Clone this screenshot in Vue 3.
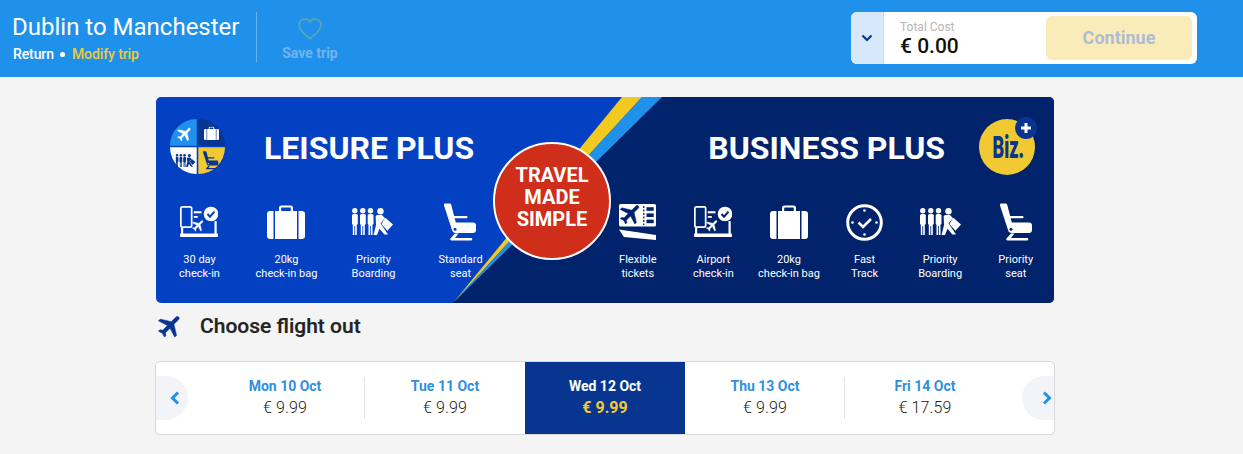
<script setup>
const leisure = [
  { icon: 'i-checkin', w: 38, h: 34, lines: ['30 day', 'check-in'] },
  { icon: 'i-bag', w: 38, h: 34, lines: ['20kg', 'check-in bag'] },
  { icon: 'i-people', w: 41, h: 28, lines: ['Priority', 'Boarding'] },
  { icon: 'i-seat', w: 32, h: 39, lines: ['Standard', 'seat'] }
]
const business = [
  { icon: 'i-ticket', w: 37, h: 36, lines: ['Flexible', 'tickets'] },
  { icon: 'i-checkin', w: 38, h: 34, lines: ['Airport', 'check-in'] },
  { icon: 'i-bag', w: 38, h: 34, lines: ['20kg', 'check-in bag'] },
  { icon: 'i-clock', w: 37, h: 37, lines: ['Fast', 'Track'] },
  { icon: 'i-people', w: 41, h: 28, lines: ['Priority', 'Boarding'] },
  { icon: 'i-seat', w: 32, h: 39, lines: ['Priority', 'seat'] }
]
const days = [
  { label: 'Mon 10 Oct', price: '€ 9.99' },
  { label: 'Tue 11 Oct', price: '€ 9.99' },
  { label: 'Wed 12 Oct', price: '€ 9.99', active: true },
  { label: 'Thu 13 Oct', price: '€ 9.99' },
  { label: 'Fri 14 Oct', price: '€ 17.59' }
]
</script>

<template>
  <div class="page">
    <svg class="defs" width="0" height="0" aria-hidden="true">
      <symbol id="i-plane" viewBox="0 0 24 24">
        <path fill="currentColor" stroke="currentColor" stroke-width=".5" d="M21 16v-2l-8-5V3.500c0-.83-.67-1.500-1.500-1.500S10 2.670 10 3.500V9l-8 5v2l8-2.500V19l-2 1.500V22l3.500-1 3.500 1v-1.500L13 19v-5.500l8 2.500z" transform="rotate(45 12 12)" />
      </symbol>
      <symbol id="i-bag" viewBox="0 0 38 34">
        <path fill="currentColor" d="M12 6V3a2.500 2.500 0 0 1 2.500-2.500h9A2.500 2.500 0 0 1 26 3v3h-2.200V3.200a.6.6 0 0 0-.6-.6h-8.400a.6.6 0 0 0-.6.6V6z" />
        <path fill="currentColor" d="M6.500 6v28H3a3 3 0 0 1-3-3V9a3 3 0 0 1 3-3zM8 6h22v28H8zM31.500 6H35a3 3 0 0 1 3 3v22a3 3 0 0 1-3 3h-3.500z" />
      </symbol>
      <symbol id="i-people" viewBox="0 0 41 28">
        <g fill="currentColor">
          <circle cx="2.800" cy="2.800" r="2.700" />
          <circle cx="10.800" cy="2.800" r="2.700" />
          <circle cx="18.500" cy="2.800" r="2.700" />
          <path d="M1.500 6h2.800A1.500 1.500 0 0 1 5.800 7.500v8.500l-1 .8V27H3.200v-9h-.8v9H.8V16.800L0 16V7.500A1.500 1.500 0 0 1 1.500 6z" />
          <path d="M9.500 6h2.800a1.500 1.500 0 0 1 1.500 1.500v8.500l-1 .8V27h-1.600v-9h-.8v9H8.800V16.800l-.8-.8V7.500A1.500 1.500 0 0 1 9.500 6z" />
          <path d="M17.200 6H20a1.500 1.500 0 0 1 1.500 1.500v8.500l-1 .8V27h-1.600v-9h-.8v9h-1.600V16.800l-.8-.8V7.500A1.500 1.500 0 0 1 17.200 6z" />
          <circle cx="28.500" cy="3.200" r="3.200" />
          <path d="M25 7h5l3 3.300-4.500 5.200 2.500 3.500 5 7.500h-3.600l-4.900-5.800-2.500 6.300H21.500l2.500-10-.3-7.500A2 2 0 0 1 25 7z" />
          <path d="M33.300 9.800L41 16.500l-5.600 6.300-6-6.700z" />
        </g>
      </symbol>
      <symbol id="i-seat" viewBox="0 0 32 39">
        <path fill="currentColor" d="M1 .5h5q1 0 1.300 1.500l4.500 17.500H29a3 3 0 0 1 3 3V27a3 3 0 0 1-3 3H12a4 4 0 0 1-4-3L0 2.500Q-.2.500 1 .5z" />
        <rect x="9" y="13" width="14.500" height="2.300" rx="1.100" fill="currentColor" />
        <circle cx="11" cy="26.300" r="1.500" fill="var(--cut)" />
        <path fill="currentColor" d="M11 30.500h3.500L11 35h16a1.300 1.300 0 0 1 0 2.600H7.500a1.300 1.300 0 0 1-1-2.100z" />
      </symbol>
      <symbol id="i-checkin" viewBox="0 0 38 34">
        <g fill="currentColor">
          <path fill-rule="evenodd" d="M2.500 1h7.500A2.500 2.500 0 0 1 12.500 3.500v17a2.500 2.500 0 0 1-2.500 2.500H2.500A2.500 2.500 0 0 1 0 20.500v-17A2.500 2.500 0 0 1 2.500 1zM2.300 2.800a.6.6 0 0 0-.6.6V20.600a.6.6 0 0 0 .6.6h7.900a.6.6 0 0 0 .6-.6V3.400a.6.6 0 0 0-.6-.6z" />
          <rect x="13.800" y="6.200" width="7.700" height="2.100" />
          <rect x="13.800" y="11" width="4" height="1.800" />
          <rect x="1" y="23" width="2.200" height="6" />
          <rect x="34.500" y="16" width="2.200" height="13" />
          <rect x="0" y="28.500" width="38" height="3.500" rx=".8" />
          <circle cx="31" cy="9" r="7.300" />
        </g>
        <path d="M27.500 9l2.500 2.700 4.500-5" fill="none" stroke="var(--cut)" stroke-width="2" />
        <use href="#i-plane" x="11" y="13" width="15" height="15" />
      </symbol>
      <symbol id="i-ticket" viewBox="0 0 37 36">
        <path fill="currentColor" d="M1.500 0h34A1.500 1.500 0 0 1 37 1.500V21a1.500 1.500 0 0 1-1.500 1.500h-34A1.500 1.500 0 0 1 0 21V1.500A1.500 1.500 0 0 1 1.500 0z" />
        <path fill="currentColor" d="M0 25.500L37 31v5L5 33z" />
        <path d="M24.800 2v19" stroke="var(--cut)" stroke-width="1.300" stroke-dasharray="2 1.500" />
        <rect x="27.500" y="3.200" width="7.200" height="3.600" fill="var(--cut)" />
        <rect x="27.500" y="9.400" width="7.200" height="3.600" fill="var(--cut)" />
        <rect x="27.500" y="15.600" width="7.200" height="3.600" fill="var(--cut)" />
        <use href="#i-plane" x="-1" y="-3" width="26" height="26" style="color: var(--cut)" />
      </symbol>
      <symbol id="i-clock" viewBox="0 0 37 37">
        <circle cx="18.500" cy="18.500" r="16.800" fill="none" stroke="currentColor" stroke-width="3" />
        <path d="M12.500 18.500l4.500 4.500 8-8" fill="none" stroke="currentColor" stroke-width="2.600" />
        <circle cx="18.500" cy="6.500" r="1.300" fill="currentColor" />
        <circle cx="18.500" cy="30.500" r="1.300" fill="currentColor" />
        <circle cx="6.500" cy="18.500" r="1.300" fill="currentColor" />
        <circle cx="30.500" cy="18.500" r="1.300" fill="currentColor" />
      </symbol>
    </svg>

    <header class="top">
      <div class="trip">
        <h1 class="route">Dublin to Manchester</h1>
        <p class="meta"><span>Return</span><i class="dot"></i><a class="modify">Modify trip</a></p>
      </div>
      <div class="save">
        <svg class="heart" viewBox="0 0 24 22" width="24" height="22">
          <path d="M12 20.600C5.500 15.200 1 11.500 1 6.800 1 3.500 3.600 1 6.800 1c2.100 0 4 1 5.200 2.900C13.200 2 15.100 1 17.200 1 20.400 1 23 3.500 23 6.800c0 4.700-4.500 8.400-11 13.800z" fill="none" stroke="#58a3b5" stroke-width="1.800" />
        </svg>
        <span>Save trip</span>
      </div>
      <div class="cost">
        <div class="toggle">
          <svg viewBox="0 0 12 8" width="12" height="8"><path d="M1.500 1.500L6 6l4.500-4.500" fill="none" stroke="#073590" stroke-width="2.200" /></svg>
        </div>
        <div class="total">
          <span class="total-label">Total Cost</span>
          <span class="total-value">€ 0.00</span>
        </div>
        <div class="continue">Continue</div>
      </div>
    </header>

    <main class="main">
      <section class="banner">
        <svg class="bg" viewBox="0 0 898 206" preserveAspectRatio="none">
          <rect width="898" height="206" fill="#0440c2" />
          <path d="M506 0H898V206H296z" fill="#01236c" />
          <path d="M466 0h20L297 206z" fill="#f1c91f" />
          <path d="M486 0h20L297 206z" fill="#2091eb" />
        </svg>

        <div class="plan plan-left">
          <div class="plan-head">
            <svg class="logo" viewBox="0 0 55 55" width="55" height="55">
              <path d="M26.700 0v26.700H0A26.700 26.700 0 0 1 26.700 0z" fill="#2091eb" />
              <path d="M28.300 0A26.700 26.700 0 0 1 55 26.700H28.300z" fill="#073590" />
              <path d="M0 28.300h26.700V55A26.700 26.700 0 0 1 0 28.300z" fill="#fff" />
              <path d="M28.300 28.300H55A26.700 26.700 0 0 1 28.300 55z" fill="#f1c933" />
              <use href="#i-plane" x="6" y="6" width="18" height="18" class="w" />
              <use href="#i-bag" x="34" y="7.500" width="15" height="13.500" class="w" />
              <use href="#i-people" x="5.500" y="35" width="20" height="13.500" class="n" />
              <use href="#i-seat" x="33" y="32" width="15.500" height="19" class="n" />
            </svg>
            <h2 class="plan-title title-left">LEISURE PLUS</h2>
          </div>
          <ul class="features">
            <li v-for="f in leisure" :key="f.lines.join()" class="feature">
              <div class="icon"><svg :width="f.w" :height="f.h"><use :href="'#' + f.icon" /></svg></div>
              <span v-for="l in f.lines" :key="l" class="line">{{ l }}</span>
            </li>
          </ul>
        </div>

        <div class="plan plan-right">
          <div class="plan-head head-right">
            <h2 class="plan-title">BUSINESS PLUS</h2>
            <svg class="biz" viewBox="0 0 60 60" width="60" height="60">
              <circle cx="28" cy="32" r="28" fill="#f1c933" />
              <text x="13.500" y="43" font-family="Roboto, sans-serif" font-weight="900" font-size="31" fill="#073590" textLength="31.500" lengthAdjust="spacingAndGlyphs">Biz.</text>
              <circle cx="47" cy="13" r="11" fill="#073590" />
              <path d="M47 8v10M42 13h10" stroke="#fff" stroke-width="3" />
            </svg>
          </div>
          <ul class="features features-six">
            <li v-for="f in business" :key="f.lines.join()" class="feature">
              <div class="icon"><svg :width="f.w" :height="f.h"><use :href="'#' + f.icon" /></svg></div>
              <span v-for="l in f.lines" :key="l" class="line">{{ l }}</span>
            </li>
          </ul>
        </div>

        <div class="badge"><span>TRAVEL</span><span>MADE</span><span>SIMPLE</span></div>
      </section>

      <div class="choose">
        <svg class="choose-plane" width="30" height="30"><use href="#i-plane" /></svg>
        <h3>Choose flight out</h3>
      </div>

      <section class="dates">
        <button class="nav nav-prev">
          <svg viewBox="0 0 10 14" width="10" height="14"><path d="M8 1.500L2.500 7 8 12.500" fill="none" stroke="#2091eb" stroke-width="3" /></svg>
        </button>
        <div v-for="d in days" :key="d.label" class="day" :class="{ active: d.active }">
          <span class="day-label">{{ d.label }}</span>
          <span class="day-price">{{ d.price }}</span>
        </div>
        <button class="nav nav-next">
          <svg viewBox="0 0 10 14" width="10" height="14"><path d="M2 1.500L7.500 7 2 12.500" fill="none" stroke="#2091eb" stroke-width="3" /></svg>
        </button>
      </section>
    </main>
  </div>
</template>

<style>
html, body { margin: 0; background: #f4f4f4; }
</style>

<style scoped>
.page { font-family: Roboto, "Liberation Sans", sans-serif; color: #222; height: 454px; overflow: hidden; background: #f4f4f4; }
.defs { position: absolute; }
.top { height: 77px; background: #2091eb; display: flex; align-items: flex-start; color: #fff; box-sizing: border-box; }
.trip { width: 243px; padding: 13px 0 0 13px; }
.route { margin: 0 0 0 -1px; font-size: 24px; font-weight: 400; line-height: 29px; white-space: nowrap; }
.meta { margin: 4px 0 0; display: flex; align-items: center; font-size: 14px; font-weight: 500; line-height: 16px; letter-spacing: -.1px; }
.dot { width: 5px; height: 5px; border-radius: 50%; background: #fff; margin: 0 7px 0 6px; }
.modify { color: #f1c933; }
.save { height: 50px; margin-top: 12px; border-left: 1px solid #6cb5ef; width: 106px; margin-right: 1px; display: flex; flex-direction: column; align-items: center; font-size: 14px; font-weight: 700; color: #74b3ee; }
.heart { margin-top: 6px; margin-bottom: 5px; display: block; }
.cost { margin: 12px 0 0 487px; width: 346px; height: 52px; background: #fff; border-radius: 6px; display: flex; overflow: hidden; }
.toggle { width: 32px; background: #d6e8f9; border-right: 1px solid #c3daf0; display: flex; align-items: center; justify-content: center; }
.total { width: 146px; padding: 8px 0 0 16px; display: flex; flex-direction: column; box-sizing: border-box; margin-right: 16px; }
.total-label { font-size: 12px; line-height: 14px; color: #b5b5b5; }
.total-value { font-size: 21px; line-height: 24px; font-weight: 500; color: #111; white-space: nowrap; }
.continue { width: 146px; height: 44px; margin-top: 4px; background: #faecb8; border-radius: 6px; color: #aebcd4; font-size: 18px; font-weight: 700; line-height: 44px; text-align: center; }

.main { width: 899px; margin-left: 156px; padding-top: 20px; }
.banner { position: relative; width: 898px; height: 206px; border-radius: 5px; overflow: hidden; display: flex; justify-content: space-between; color: #fff; }
.bg { position: absolute; inset: 0; width: 100%; height: 100%; }
.plan { position: relative; display: flex; flex-direction: column; }
.plan-left { width: 348px; }
.plan-right { width: 454px; }
.plan-head { height: 106px; padding-top: 22px; box-sizing: border-box; display: flex; align-items: flex-start; }
.head-right { justify-content: flex-end; padding-right: 15px; }
.logo { margin-left: 14px; margin-right: 39px; flex: none; --cut: #f1c933; }
.w { color: #fff; }
.n { color: #073590; }
.plan-title { margin: 10px 0 0; font-size: 32px; line-height: 38px; font-weight: 700; white-space: nowrap; }
.biz { margin-left: 34px; margin-top: -4px; flex: none; overflow: visible; }
.features { list-style: none; margin: 0; padding: 0; display: grid; grid-template-columns: repeat(4, 87px); }
.features-six { grid-template-columns: repeat(6, 75.6px); }
.feature { display: flex; flex-direction: column; align-items: center; font-size: 11px; line-height: 14px; color: #fff; --cut: #0440c2; }
.features-six .feature { --cut: #01236c; }
.icon { height: 40px; margin-bottom: 11px; margin-top: -1px; display: flex; align-items: center; justify-content: center; color: #fff; }
.features:not(.features-six) .icon { margin-left: -2px; }
.icon svg { display: block; overflow: visible; }
.line { white-space: nowrap; }
.badge { position: absolute; left: 337px; top: 45px; width: 114px; height: 114px; box-sizing: content-box; padding: 0; border-radius: 50%; border: 2px solid #fff; background: #cf2e1a; display: flex; flex-direction: column; align-items: center; justify-content: flex-start; font-size: 20px; font-weight: 700; line-height: 22px; }
.badge span:first-child { margin-top: 20px; }

.choose { display: flex; align-items: center; height: 46px; }
.choose-plane { color: #073590; margin: 0 15px 0 0; width: 29px; flex: none; }
.choose h3 { margin: 0; font-size: 21px; font-weight: 500; color: #222; -webkit-text-stroke: .2px #222; }
.dates { width: 900px; height: 74px; margin: 12px 0 0 -1px; box-sizing: border-box; background: #fff; border: 1px solid #d9d9d9; border-radius: 5px; display: flex; overflow: hidden; padding-left: 49px; position: relative; }
.nav { position: absolute; top: 14px; width: 32px; height: 44px; padding: 0; border: 0; background: #f2f4f7; display: flex; align-items: center; }
.nav-prev { left: 0; border-radius: 0 22px 22px 0; justify-content: flex-start; padding-left: 14px; box-sizing: border-box; }
.nav-next { right: 0; border-radius: 22px 0 0 22px; justify-content: flex-end; padding-right: 2px; box-sizing: border-box; }
.day { width: 160px; display: flex; flex-direction: column; align-items: center; justify-content: center; position: relative; }
.day-label { font-size: 14px; font-weight: 700; line-height: 20px; color: #2f8fdf; }
.day-price { font-size: 16px; line-height: 24px; font-weight: 300; color: #222; letter-spacing: .1px; }
.day.active { background: #073590; }
.active .day-label { color: #fff; }
.active .day-price { color: #f1c933; font-weight: 700; letter-spacing: 0; }
.day:nth-of-type(1)::after, .day:nth-of-type(4)::after { content: ""; position: absolute; right: 0; top: 15px; height: 42px; width: 1px; background: #e2e2e2; }
</style>
